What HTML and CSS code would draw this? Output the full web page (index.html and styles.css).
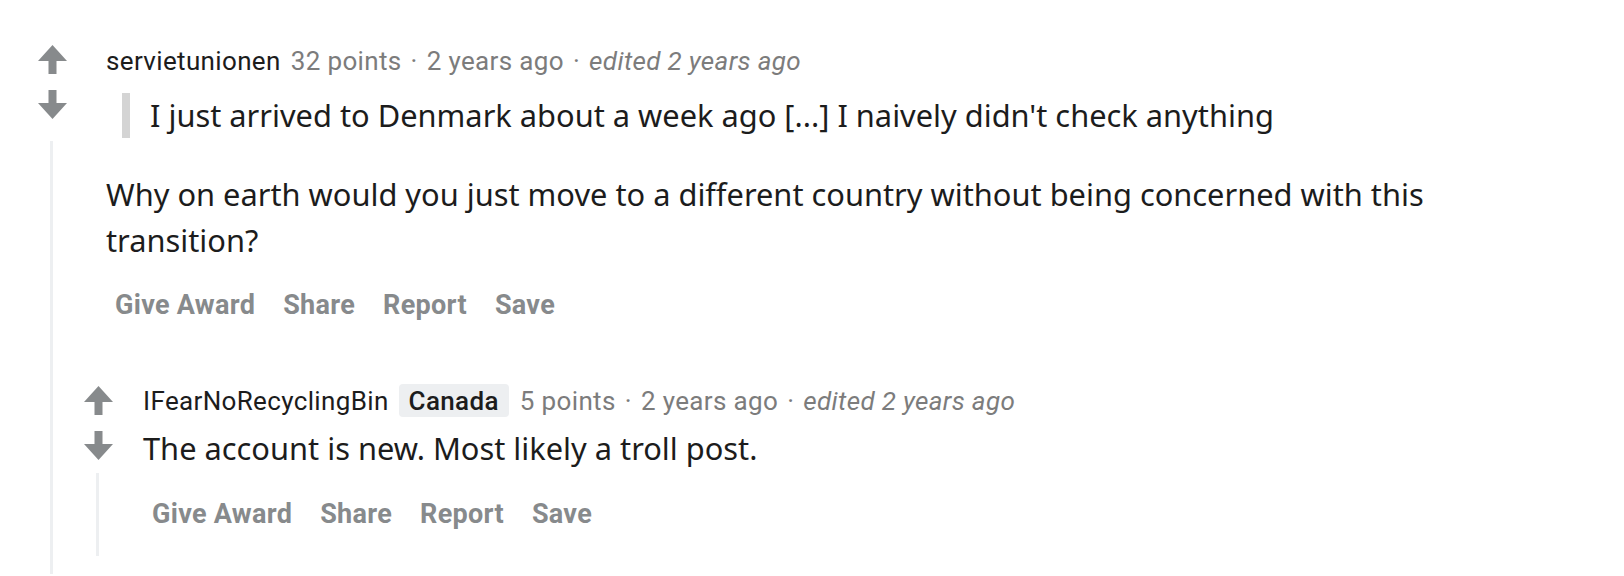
FILE: index.html
```html
<!DOCTYPE html>
<html lang="en">
<head>
<meta charset="utf-8">
<title>Comments</title>
<link rel="stylesheet" href="styles.css">
</head>
<body>
<div class="page">
  <div class="comment level1">
    <div class="votes">
      <svg class="arrow" viewBox="0 0 29 29" aria-label="upvote"><path d="M14.5 0 L29 16 H18.5 V29 H10.5 V16 H0 Z"/></svg>
      <svg class="arrow down" viewBox="0 0 29 29" aria-label="downvote"><path d="M10.5 0 H18.5 V13 H29 L14.5 29 L0 13 H10.5 Z"/></svg>
      <div class="threadline"></div>
    </div>
    <div class="main">
      <div class="meta">
        <span class="author">servietunionen</span>
        <span class="muted">32 points</span>
        <span class="muted dot">·</span>
        <span class="muted">2 years ago</span>
        <span class="muted dot">·</span>
        <span class="muted edited">edited 2 years ago</span>
      </div>
      <blockquote class="quote">I just arrived to Denmark about a week ago [...] I naively didn't check anything</blockquote>
      <p class="text">Why on earth would you just move to a different country without being concerned with this transition?</p>
      <div class="actions">
        <span class="action">Give Award</span>
        <span class="action">Share</span>
        <span class="action">Report</span>
        <span class="action">Save</span>
      </div>
      <div class="children">
        <div class="comment level2">
          <div class="votes">
            <svg class="arrow" viewBox="0 0 29 29" aria-label="upvote"><path d="M14.5 0 L29 16 H18.5 V29 H10.5 V16 H0 Z"/></svg>
            <svg class="arrow down" viewBox="0 0 29 29" aria-label="downvote"><path d="M10.5 0 H18.5 V13 H29 L14.5 29 L0 13 H10.5 Z"/></svg>
            <div class="threadline"></div>
          </div>
          <div class="main">
            <div class="meta">
              <span class="author">IFearNoRecyclingBin</span>
              <span class="flair">Canada</span>
              <span class="muted">5 points</span>
              <span class="muted dot">·</span>
              <span class="muted">2 years ago</span>
              <span class="muted dot">·</span>
              <span class="muted edited">edited 2 years ago</span>
            </div>
            <p class="text">The account is new. Most likely a troll post.</p>
            <div class="actions">
              <span class="action">Give Award</span>
              <span class="action">Share</span>
              <span class="action">Report</span>
              <span class="action">Save</span>
            </div>
          </div>
        </div>
      </div>
    </div>
  </div>
</div>
</body>
</html>
```

FILE: styles.css
```css
html, body {
  margin: 0;
  padding: 0;
  background: #ffffff;
}

.page {
  padding: 45px 0 0 38px;
  font-family: "Noto Sans", "Open Sans", sans-serif;
  color: #1c1c1c;
}

.comment {
  display: flex;
  align-items: stretch;
}

.votes {
  width: 29px;
  flex: 0 0 29px;
  display: flex;
  flex-direction: column;
}

.level2 > .votes {
  padding-top: 2px;
}

.arrow {
  width: 29px;
  height: 29px;
  display: block;
  fill: #878a8c;
}

.arrow.down {
  margin-top: 16px;
}

.threadline {
  flex: 1;
  width: 3px;
  background: #edeff1;
  margin-top: 22px;
  margin-left: 12px;
}

.level2 .threadline {
  margin-top: 13px;
  margin-left: 12px;
}

.main {
  flex: 1;
  min-width: 0;
}

.level1 > .main {
  margin-left: 39px;
  padding-bottom: 18px;
}

.level2 > .main {
  margin-left: 30px;
  padding-bottom: 26px;
}

.meta {
  display: flex;
  align-items: center;
  height: 32px;
  font-family: Roboto, "Liberation Sans", sans-serif;
  font-size: 26px;
  line-height: 32px;
  letter-spacing: 0.35px;
  white-space: nowrap;
}

.level2 .meta {
  height: 33px;
}

.author {
  color: #1c1c1c;
  margin-right: 10px;
}

.muted {
  color: #7c7c7c;
}

.dot {
  margin: 0 9px;
}

.edited {
  font-style: italic;
}

.flair {
  display: inline-flex;
  align-items: center;
  height: 33px;
  padding: 0 10px;
  margin-right: 11px;
  background: #edeff1;
  border-radius: 4px;
  color: #1c1c1c;
  font-weight: 500;
}

.quote {
  margin: 16px 0 0 16px;
  padding: 0 0 0 20px;
  border-left: 8px solid #d4d4d4;
  font-size: 30.8px;
  line-height: 45px;
}

.text {
  margin: 33px 0 0 0;
  max-width: 1400px;
  font-size: 30.8px;
  line-height: 46px;
}

.level2 .text {
  margin-top: 8px;
}

.actions {
  display: flex;
  gap: 28px;
  margin-top: 26px;
  padding-left: 9px;
  height: 32px;
  font-family: Roboto, "Liberation Sans", sans-serif;
  font-weight: 700;
  font-size: 27px;
  line-height: 32px;
  letter-spacing: 0.3px;
  color: #878a8c;
}

.level2 .actions {
  margin-top: 27px;
}

.children {
  margin-top: 63px;
  margin-left: -22px;
}
```
